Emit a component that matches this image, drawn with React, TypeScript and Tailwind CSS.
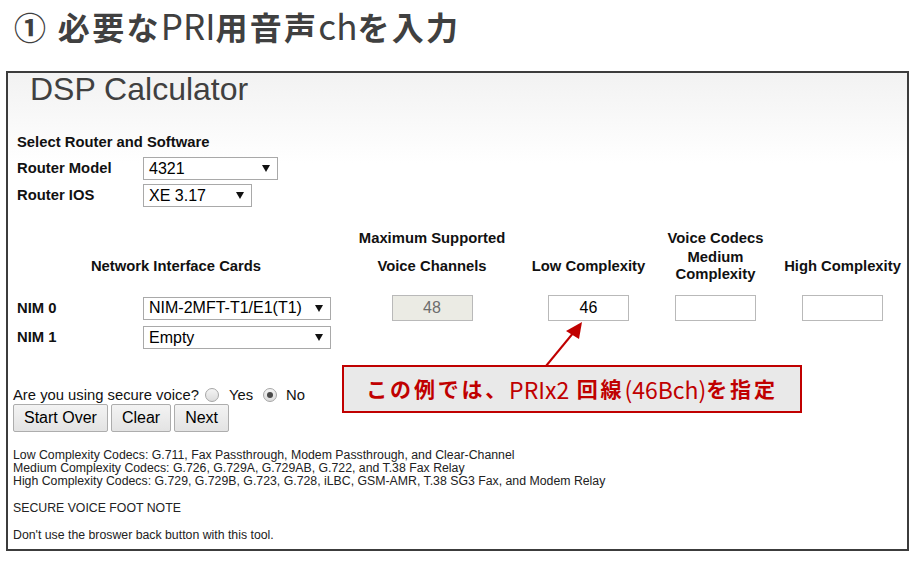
import React from "react";

function Caret() {
  return (
    <svg width="8" height="7" viewBox="0 0 8 7" className="shrink-0">
      <polygon points="0,0 8,0 4,7" fill="#111" />
    </svg>
  );
}

function SelectBox({ value, className }: { value: string; className: string }) {
  return (
    <div
      className={`${className} h-[23px] border border-[#a9a9a9] bg-white flex items-center justify-between pl-[5px] pr-[7px] text-[16px] font-normal text-black`}
    >
      <span>{value}</span>
      <Caret />
    </div>
  );
}

function NumBox({ value, disabled }: { value?: string; disabled?: boolean }) {
  return (
    <div
      className={
        disabled
          ? "mx-auto w-[81px] h-[26px] border border-[#b9b9b9] bg-[#ebebe4] text-[#6d6d6d] text-[16px] font-normal flex items-center justify-center"
          : "mx-auto w-[81px] h-[26px] border border-[#b9b9b9] bg-white text-black text-[16px] font-normal flex items-center justify-center"
      }
    >
      {value}
    </div>
  );
}

function Radio({ checked }: { checked?: boolean }) {
  return (
    <span className="w-[14px] h-[14px] rounded-full border border-[#a6a6a6] bg-[linear-gradient(to_bottom,#f4f4f4,#dcdcdc)] flex items-center justify-center">
      {checked && <span className="w-[6px] h-[6px] rounded-full bg-[#4a4a4a]" />}
    </span>
  );
}

function Btn({ label }: { label: string }) {
  return (
    <button className="h-[28px] px-[10px] border border-[#adadad] rounded-[2px] bg-[linear-gradient(to_bottom,#f3f3f3,#e3e3e3)] text-[16px] text-black leading-none">
      {label}
    </button>
  );
}

export default function App() {
  return (
    <div className="relative w-[916px] h-[561px] bg-white overflow-hidden font-['Liberation_Sans',Arial,sans-serif] text-[#111]">
      {/* page heading */}
      <h1 className="h-[71px] pl-[14px] pt-[4px] text-[32px] leading-[42px] tracking-[2.3px] font-bold text-[#404040] font-['Noto_Sans_CJK_JP',sans-serif]">
        ① 必要な<span className="font-normal text-[35px] tracking-normal">PRI</span>用音声
        <span className="font-normal text-[35px] tracking-normal">ch</span>を入力
      </h1>

      {/* calculator panel */}
      <div className="ml-[6px] w-[903px] h-[480px] border-2 border-[#3c3c3c] bg-[linear-gradient(to_bottom,#f2f2f2,#ffffff_90px)]">
        <div className="pl-[22px] text-[32px] leading-[32px] text-[#404040]">DSP Calculator</div>

        <div className="mt-[29px] pl-[9px] text-[14.8px] leading-[16px] font-bold">Select Router and Software</div>

        <div className="mt-[7px] pl-[9px] h-[23px] flex items-center">
          <div className="w-[126px] text-[14.8px] font-bold">Router Model</div>
          <SelectBox value="4321" className="w-[135px]" />
        </div>
        <div className="mt-[4px] pl-[9px] h-[23px] flex items-center">
          <div className="w-[126px] text-[14.8px] font-bold">Router IOS</div>
          <SelectBox value="XE 3.17" className="w-[109px]" />
        </div>

        {/* table header */}
        <div className="mt-[23px] ml-[5px] grid grid-cols-[130px_196px_186px_127px_127px_127px] text-[14.8px] font-bold text-center leading-[16px]">
          <div className="col-span-2" />
          <div>Maximum Supported</div>
          <div />
          <div>Voice Codecs</div>
          <div />
        </div>
        <div className="mt-[3px] ml-[5px] h-[34px] grid grid-cols-[130px_196px_186px_127px_127px_127px] items-center text-[14.8px] font-bold text-center">
          <div className="col-span-2">Network Interface Cards</div>
          <div>Voice Channels</div>
          <div>Low Complexity</div>
          <div className="leading-[17px]">
            Medium
            <br />
            Complexity
          </div>
          <div className="whitespace-nowrap">High Complexity</div>
        </div>

        {/* NIM rows */}
        <div className="mt-[12px] ml-[5px] h-[26px] grid grid-cols-[130px_196px_186px_127px_127px_127px] items-center text-[14.8px] font-bold">
          <div className="pl-[4px]">NIM 0</div>
          <SelectBox value="NIM-2MFT-T1/E1(T1)" className="w-[188px]" />
          <NumBox value="48" disabled />
          <NumBox value="46" />
          <NumBox />
          <NumBox />
        </div>
        <div className="mt-[5px] ml-[5px] h-[23px] grid grid-cols-[130px_196px_186px_127px_127px_127px] items-center text-[14.8px] font-bold">
          <div className="pl-[4px]">NIM 1</div>
          <SelectBox value="Empty" className="w-[188px]" />
        </div>

        {/* secure voice */}
        <div className="mt-[37px] ml-[5px] h-[18px] flex items-center text-[14.8px]">
          <span>Are you using secure voice?</span>
          <span className="ml-[6px]">
            <Radio />
          </span>
          <span className="ml-[10px]">Yes</span>
          <span className="ml-[10px]">
            <Radio checked />
          </span>
          <span className="ml-[9px]">No</span>
        </div>
        <div className="ml-[5px] flex gap-[3px]">
          <Btn label="Start Over" />
          <Btn label="Clear" />
          <Btn label="Next" />
        </div>

        {/* notes */}
        <div className="mt-[17px] ml-[5px] text-[12.3px] leading-[13px] text-[#222]">
          <p>Low Complexity Codecs: G.711, Fax Passthrough, Modem Passthrough, and Clear-Channel</p>
          <p>Medium Complexity Codecs: G.726, G.729A, G.729AB, G.722, and T.38 Fax Relay</p>
          <p>High Complexity Codecs: G.729, G.729B, G.723, G.728, iLBC, GSM-AMR, T.38 SG3 Fax, and Modem Relay</p>
          <p className="mt-[14px]">SECURE VOICE FOOT NOTE</p>
          <p className="mt-[14px]">Don't use the broswer back button with this tool.</p>
        </div>
      </div>

      {/* annotation arrow */}
      <svg className="absolute left-[530px] top-[310px]" width="70" height="60" viewBox="0 0 70 60">
        <line x1="16" y1="56" x2="44" y2="22" stroke="#c00000" strokeWidth="2" />
        <polygon points="52,12 36,21 49,29" fill="#c00000" />
      </svg>

      {/* annotation callout */}
      <div className="absolute left-[342px] top-[365px] w-[460px] h-[48px] border-2 border-[#c00000] bg-[#e9e9e9] flex items-center justify-center text-[21px] tracking-[2.8px] font-bold text-[#c00000] font-['Noto_Sans_CJK_JP',sans-serif]">
        この例では、<span className="font-normal text-[23px] tracking-normal">PRIx2</span>&nbsp;回線
        <span className="font-normal text-[23px] tracking-normal">(46Bch)</span>を指定
      </div>
    </div>
  );
}
